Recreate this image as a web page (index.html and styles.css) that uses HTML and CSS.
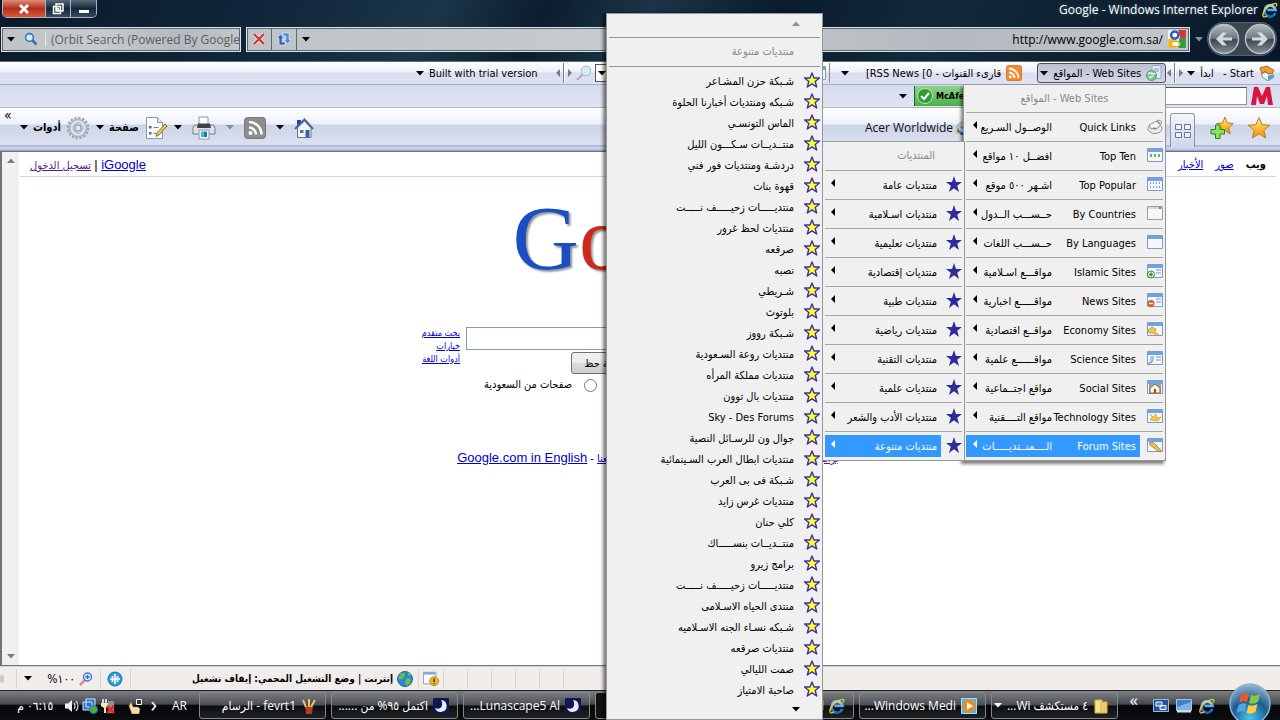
FILE: index.html
```html
<!DOCTYPE html>
<html lang="ar" dir="rtl">

<head>
    <meta charset="UTF-8">
    <title>Google - Windows Internet Explorer</title>
    <link rel="stylesheet" href="styles.css">
</head>
<body>
    <svg class="sprite" aria-hidden="true">
        <defs>
            <linearGradient id="gold" x1="0" y1="0" x2="0" y2="1">
                <stop offset="0" stop-color="#fff0a8"/>
                <stop offset="0.5" stop-color="#fcbf35"/>
                <stop offset="1" stop-color="#e98f10"/>
            </linearGradient>
            <linearGradient id="blue" x1="0" y1="0" x2="0" y2="1">
                <stop offset="0" stop-color="#8fe0ff"/>
                <stop offset="1" stop-color="#0d63c4"/>
            </linearGradient>
            <linearGradient id="steel" x1="0" y1="0" x2="0" y2="1">
                <stop offset="0" stop-color="#b4bac0"/>
                <stop offset="0.48" stop-color="#6d767f"/>
                <stop offset="0.52" stop-color="#3c4650"/>
                <stop offset="1" stop-color="#84909a"/>
            </linearGradient>
            <radialGradient id="orb" cx="0.5" cy="0.85" r="0.9">
                <stop offset="0" stop-color="#49c5ee"/>
                <stop offset="0.5" stop-color="#1b5c94"/>
                <stop offset="1" stop-color="#a9c4d8"/>
            </radialGradient>
        </defs>
        <symbol id="i-star" viewBox="0 0 16 16"><path d="M8 1l2 5h5.500l-4.300 3.500 1.500 5.500L8 11.800 3.300 15l1.500-5.500L.5 6H6z" fill="#ffff2e" stroke="#3a35a0" stroke-width="1.400" stroke-linejoin="round"/></symbol>
        <symbol id="i-bluestar" viewBox="0 0 16 16"><path d="M8 0l2 6h6l-4.800 3.700L13 16l-5-3.800L3 16l1.800-6.300L0 6h6z" fill="#2c2c9c"/></symbol>
        <symbol id="i-goldstar" viewBox="0 0 24 24"><path d="M12 1.500l3 7.200 7.800.6-6 5 2 7.700-6.800-4.200L5.200 22l2-7.700-6-5 7.800-.6z" fill="url(#gold)" stroke="#c27a17" stroke-linejoin="round"/></symbol>
        <symbol id="i-addstar" viewBox="0 0 24 24"><path d="M15 1l2.300 6 6 .5-4.600 4 1.500 6.500-5.200-3.600L9.500 18l1.600-6.500-4.600-4 6.200-.5z" fill="url(#gold)" stroke="#c27a17" stroke-linejoin="round"/><path d="M5.500 9h4.500v4.500h4.500V18H10v4.500H5.500V18H1v-4.500h4.500z" fill="#8be35a" stroke="#258421"/></symbol>
        <symbol id="i-ie" viewBox="0 0 18 18"><path d="M15 12.500A6.300 6.300 0 1 1 15.300 9H6" fill="none" stroke="url(#blue)" stroke-width="3"/><path d="M1.500 16.500C-1 12 8 2 15.500 1.500c2 .5 1 2.500.5 3.500M1.500 16.500c1.500.8 3 0 4.500-1" fill="none" stroke="#f9c42c" stroke-width="1.500"/></symbol>
        <symbol id="i-window" viewBox="0 0 16 14"><path d="M.5.500h15v13H.5z" fill="#f4f8fe" stroke="#7c9cc6"/><path d="M1 1h14v3H1z" fill="#6fa3e4"/></symbol>
        <symbol id="i-rss" viewBox="0 0 16 16"><rect x=".5" y=".5" width="15" height="15" rx="2" fill="#f58b2c" stroke="#d7782a"/><g fill="none" stroke="#fff" stroke-width="1.800"><path d="M3 7.500a5.500 5.500 0 0 1 5.500 5.500M3 3.500a9.500 9.500 0 0 1 9.500 9.500"/></g><circle cx="4.300" cy="11.800" r="1.500" fill="#fff"/></symbol>
        <symbol id="i-grayrss" viewBox="0 0 22 22"><rect x=".5" y=".5" width="21" height="21" rx="3" fill="#8d8d8d" stroke="#777"/><g fill="none" stroke="#fff" stroke-width="2.500"><path d="M5 10.500a7 7 0 0 1 7 7M5 5a12.500 12.500 0 0 1 12.500 12.500"/></g><circle cx="6.500" cy="16" r="2" fill="#fff"/></symbol>
        <symbol id="i-home" viewBox="0 0 20 20"><path d="M3 2h4v6H3z" fill="#2a3fc0"/><path d="M3.500 9.500L10.500 3l6.500 6.500V19.500H3.500z" fill="#f2f5fa" stroke="#68798f"/><path d="M1 11L10.500 1.500 19 11" fill="none" stroke="#48679c" stroke-width="2"/><path d="M11.500 12h4v7.500h-4z" fill="#2f66a0"/><path d="M6 12h3.500v3H6z" fill="#607486"/></symbol>
        <symbol id="i-printer" viewBox="0 0 24 24"><path d="M7 1h9v8H7z" fill="#fff" stroke="#8b98a6"/><path d="M2.500 9h19l1.500 3v6H1v-6z" fill="#dde2e7" stroke="#707a85"/><path d="M6 7.500h12l1 4.500H5z" fill="#3d444c"/><path d="M7 14h10v9H7z" fill="#fff" stroke="#8b98a6"/><path d="M9 15.500h3V21H9z" fill="#2ec4d8"/><path d="M12 15.500h3V21h-3z" fill="#3170c0"/></symbol>
        <symbol id="i-page" viewBox="0 0 22 24"><path d="M1.500 1.500h11l5 5v16h-16z" fill="#fcfdff" stroke="#8e99a7"/><path d="M12.500 1.500v5h5" fill="#dde5ef" stroke="#8e99a7"/><path d="M4 10h2.500v2.500H4zM4 16h2.500v2.500H4z" fill="#566a80"/><path d="M8.500 11.500h5M8.500 17.500h3" stroke="#70839c"/><path d="M20 8l2 2-8 9-3 1.500L12 17z" fill="#f3c842" stroke="#6b5520" stroke-width=".8"/></symbol>
        <symbol id="i-gear" viewBox="0 0 24 24"><circle cx="12" cy="12" r="10.200" fill="none" stroke="#94a4b0" stroke-width="2" stroke-dasharray="2.400 1.600"/><circle cx="12" cy="12" r="8.500" fill="#dbe4ea" stroke="#a3b3be" stroke-width="1.500"/><circle cx="12" cy="12" r="5" fill="#c3d0d9" stroke="#a9b8c2"/><circle cx="12" cy="12" r="3" fill="#e3e8f4" stroke="#8797a5"/></symbol>
        <symbol id="i-search" viewBox="0 0 14 14"><path d="M8 8l4.500 4.500" stroke="#3b6fae" stroke-width="2.500"/><circle cx="5.500" cy="5.500" r="3.900" fill="#d7ebfc" stroke="#3d73b8" stroke-width="1.600"/></symbol>
        <symbol id="i-find" viewBox="0 0 16 16"><path d="M1 15l6-6" stroke="#bba3cf" stroke-width="2.200"/><circle cx="10" cy="6" r="4.800" fill="#d5edf6" stroke="#a6bccb"/></symbol>
        <symbol id="i-stop" viewBox="0 0 12 12"><path d="M1 1l10 10M11 1L1 11" stroke="#f3d9d9" stroke-width="4"/><path d="M1 1l10 10M11 1L1 11" stroke="#c8393a" stroke-width="2.200"/></symbol>
        <symbol id="i-refresh" viewBox="0 0 16 16"><path d="M1 7.500L4.500 3 8 7.500H6V11h3v3H3V7.500z" fill="#2a63b6" stroke="#dceafa" stroke-width=".7"/><path d="M15 8.500L11.500 13 8 8.500h2V5H7V2h6v6.500z" fill="#4b88d6" stroke="#dceafa" stroke-width=".7"/></symbol>
        <symbol id="i-google" viewBox="0 0 18 18"><path d="M1 1h16v16H1z" fill="#f5f7fb"/><path d="M10 1h7v7h-5z" fill="#d8342c"/><path d="M11 8h6v9h-7z" fill="#2d9d49"/><path d="M1 9h5v8H1z" fill="#f5b921"/><circle cx="7" cy="5.500" r="3.300" fill="#fff" stroke="#2a5bc9" stroke-width="2.200"/><ellipse cx="7.500" cy="13.500" rx="4" ry="2.600" fill="#fff" stroke="#e9a91b" stroke-width="1.500"/></symbol>
        <symbol id="i-start" viewBox="0 0 16 16"><path d="M3 8l10-1 2 5-6 4-6-4z" fill="#f4f6fa" stroke="#7492ad"/><path d="M1 3l7-2 7 4.500-2 3L9 9 6 6 3 9z" fill="#f39a2c" stroke="#b06a1c"/><path d="M9 10.500l5-1v3l-5 3z" fill="#4b9fd4"/></symbol>
        <symbol id="i-sites" viewBox="0 0 16 16"><path d="M6 .5h9v13H6z" fill="#e3eafb" stroke="#94a6d0"/><path d="M8 4h5M8 6h5" stroke="#8b9cc8"/><circle cx="5.500" cy="10.500" r="5" fill="#7cc88a" stroke="#4a9c63"/><path d="M2 9c3-3 5 2 7-1M3 13l4-2" stroke="#e9f8ee" stroke-width="1.500" fill="none"/></symbol>
        <symbol id="i-mouse" viewBox="0 0 16 16"><ellipse cx="8" cy="10.500" rx="7" ry="5" fill="#eee" stroke="#8f8f9a"/><path d="M2 7l10-5 3 2-4 6-7 1z" fill="#f8f8fa" stroke="#8f8f9a"/><path d="M6 10l3 1M10 3l3 3" stroke="#53a06b" stroke-width="1.500"/></symbol>
        <symbol id="i-globe" viewBox="0 0 16 16"><circle cx="8" cy="8" r="7.500" fill="#2c86d6" stroke="#265f98"/><path d="M3 3c4-3 6 0 4 3S3 9 1 7zM9 8c4-2 6 1 4 4s-4 3-5 1zM11 1l3 3-3 1z" fill="#5ec152"/></symbol>
        <symbol id="i-blocked" viewBox="0 0 18 16"><path d="M.5.500h14v13H.5z" fill="#fff" stroke="#8393b4"/><path d="M1 1h13v2H1z" fill="#7ba6dd"/><circle cx="12.500" cy="10.500" r="5" fill="#f5b529" stroke="#b8801a"/><path d="M12.500 7.500v4M12.500 12.500v1.500" stroke="#422d0b" stroke-width="1.600"/></symbol>
        <symbol id="i-compat" viewBox="0 0 16 16"><circle cx="8" cy="8" r="7" fill="#2b9ed6" stroke="#1474ac"/><path d="M8 3v10M3 8h10M5.500 5v6M10.500 5v6" stroke="#fff" stroke-width="1.600"/></symbol>
        <symbol id="i-zoom" viewBox="0 0 14 14"><path d="M1 13l5-5" stroke="#e08d8b" stroke-width="2.500"/><circle cx="8.500" cy="5" r="4" fill="#d8eafc" stroke="#477cc6" stroke-width="1.500"/><path d="M8.500 3v4M6.500 5h4" stroke="#2969c0" stroke-width="1.300"/></symbol>
        <symbol id="i-luna" viewBox="0 0 16 16"><rect width="16" height="16" rx="1" fill="#10164f"/><path d="M8 2a6 6 0 1 1-6 8c6 3 9-3 6-8z" fill="#e7ecff"/></symbol>
        <symbol id="i-media" viewBox="0 0 16 16"><path d="M.5.500h15v15H.5z" fill="#4bb5e6" stroke="#a3defa"/><circle cx="8" cy="8" r="6.500" fill="#f18a1c"/><path d="M6 4.500l6 3.500-6 3.500z" fill="#fff"/></symbol>
        <symbol id="i-folder" viewBox="0 0 14 16"><path d="M1 2h7v13H1z" fill="#f7e28d" stroke="#d3b24c"/><path d="M7 4h6v11H7z" fill="#ecce64" stroke="#d3b24c"/></symbol>
        <symbol id="i-paint" viewBox="0 0 14 16"><path d="M3 8h8l-1 8H4z" fill="#b23b22"/><path d="M4 9L1 2M7 9V1M9 9l4-7" stroke="#e9c26d" stroke-width="2"/></symbol>
        <symbol id="i-desktop" viewBox="0 0 16 14"><path d="M.5.500h15v11H.5z" fill="#3f7fcc" stroke="#a9c5e4"/><path d="M1 8l14-5v8H1z" fill="#7fb4e9"/><path d="M1 12.500h14" stroke="#d4dee8" stroke-width="2"/></symbol>
        <symbol id="i-switch" viewBox="0 0 16 14"><path d="M.5.500h15v12H.5z" fill="#264f9a" stroke="#9bb4d8"/><path d="M3 3h6v4H3zM7 6.500h6v4H7z" fill="#4c82cc" stroke="#fff"/></symbol>
        <symbol id="i-nav" viewBox="0 0 32 32"><circle cx="16" cy="16" r="14.500" fill="url(#steel)" stroke="#b8c0c6" stroke-width="1.500"/><path d="M24 14.500H14.500l4.500-5h-4.500L8 16l6.500 6.500H19l-4.500-5H24z" fill="#d4d9dd"/></symbol>
        <symbol id="i-orb" viewBox="0 0 42 42"><circle cx="21" cy="21" r="20" fill="url(#orb)" stroke="#8fb1ca" stroke-width="1.500"/><path d="M12 12q4-3 8-1l-2 8q-4-2-8 1z" fill="#ea5b28"/><path d="M22 12q4 2 9-1l-2 8q-5 3-9 1z" fill="#8cc63e"/><path d="M9.500 22q4-3 8-1l-2 8q-4-2-8 1z" fill="#4fa5e8"/><path d="M19.500 22q4 2 9-1l-2 8q-5 3-9 1z" fill="#fbce3a"/></symbol>
        <symbol id="i-down" viewBox="0 0 8 5"><path d="M0 0h8L4 4.500z" fill="currentColor"/></symbol>
        <symbol id="i-grip" viewBox="0 0 16 20"><path d="M4 6v8L0 10zM12 6v8l4-4z" fill="#777b88"/><path d="M7.500 0v20" stroke="#777b88"/><path d="M8.500 0v20" stroke="#fff"/></symbol>
    </svg>

    <header class="chrome">
        <div class="title-bar">
            <svg class="icon16"><use href="#i-ie"/></svg>
            <span class="window-title">Google - Windows Internet Explorer</span>
            <div class="window-buttons">
                <button class="minimize" aria-label="تصغير"><svg viewBox="0 0 12 12"><path d="M1 7h10v3H1z" fill="#fff"/></svg></button>
                <button aria-label="استعادة"><svg viewBox="0 0 12 12"><path d="M4 1h7v7H4z M1.500 3.500h7v7h-7z M4.500 5.500h2v2h-2z" fill="none" stroke="#fff" stroke-width="1.500"/></svg></button>
                <button class="close" aria-label="إغلاق"><svg viewBox="0 0 12 12"><path d="M2 2l8 8M10 2l-8 8" stroke="#fff" stroke-width="2.800"/></svg></button>
            </div>
        </div>
        <div class="address-row">
            <div class="nav-buttons">
                <button aria-label="الأمام"><svg class="flip"><use href="#i-nav"/></svg></button>
                <button aria-label="الخلف"><svg><use href="#i-nav"/></svg></button>
            </div>
            <button class="drop dim" aria-label="الصفحات الأخيرة"><svg><use href="#i-down"/></svg></button>
            <div class="address-box">
                <svg class="icon20"><use href="#i-google"/></svg>
                <input class="url" dir="ltr" type="text" aria-label="العنوان" value="http://www.google.com.sa/">
                <button class="drop" aria-label="السجل"><svg><use href="#i-down"/></svg></button>
                <button class="cell" aria-label="تحديث"><svg class="icon16"><use href="#i-refresh"/></svg></button>
                <button class="cell" aria-label="إيقاف"><svg class="icon12"><use href="#i-stop"/></svg></button>
            </div>
            <div class="search-box">
                <input dir="ltr" type="text" aria-label="بحث" value="(Orbit Search (Powered By Google">
                <button aria-label="بحث"><svg class="icon14"><use href="#i-search"/></svg></button>
                <button class="drop" aria-label="خيارات البحث"><svg><use href="#i-down"/></svg></button>
            </div>
        </div>
    </header>

    <nav class="links-bar">
        <button class="tool"><svg class="icon16"><use href="#i-start"/></svg><span>Start - &nbsp; ابدأ</span><svg class="caret"><use href="#i-down"/></svg></button>
        <svg class="grip"><use href="#i-grip"/></svg>
        <button class="tool pressed"><svg class="icon16"><use href="#i-sites"/></svg><span>Web Sites - المواقع</span><svg class="caret"><use href="#i-down"/></svg></button>
        <button class="tool rss-tool"><svg class="icon16"><use href="#i-rss"/></svg><span>قارىء القنوات - <bdi dir="ltr">[RSS News [0</bdi></span><svg class="caret"><use href="#i-down"/></svg></button>
        <button class="tool edge-tool" aria-label="نافذة"><svg class="icon16"><use href="#i-window"/></svg></button>
        <div class="links-end">
            <button class="combo" aria-label="كلمات البحث"><svg class="caret"><use href="#i-down"/></svg></button>
            <button class="tool" aria-label="بحث"><svg class="icon16"><use href="#i-find"/></svg></button>
            <svg class="grip"><use href="#i-grip"/></svg>
            <button class="tool trial"><span>Built with trial version</span><svg class="caret"><use href="#i-down"/></svg></button>
        </div>
    </nav>

    <div class="mcafee-bar">
        <svg class="mcafee-logo" viewBox="0 0 22 18"><path d="M0 18L3 0h4l4 9 4-9h4l3 18h-5l-1-9-3 8h-4L6 9l-1 9z" fill="#d8163c"/></svg>
        <input type="text" aria-label="بحث آمن">
        <button class="mcafee"><svg class="icon16" viewBox="0 0 16 16"><circle cx="8" cy="8" r="7.500" fill="#2f9c39" stroke="#b9e8b6"/><path d="M4 8l3 3 5-6" fill="none" stroke="#fff" stroke-width="2"/></svg><b>McAfee</b></button>
        <svg class="caret"><use href="#i-down"/></svg>
    </div>

    <div class="command-bar">
        <button class="fav" aria-label="المفضلة"><svg><use href="#i-goldstar"/></svg></button>
        <button class="fav" aria-label="إضافة إلى المفضلة"><svg><use href="#i-addstar"/></svg></button>
        <button class="quick-tabs" aria-label="علامات التبويب"><svg viewBox="0 0 16 14"><path d="M.5.500h6v5h-6zM9.500.500h6v5h-6zM.5 8.500h6v5h-6zM9.500 8.500h6v5h-6z" fill="#eef1f8" stroke="#6c7890"/></svg></button>
        <a class="tab" href="#"><svg class="icon16"><use href="#i-ie"/></svg><span>Acer Worldwide</span></a>
        <div class="commands">
            <button aria-label="الصفحة الرئيسية"><svg class="icon20"><use href="#i-home"/></svg></button>
            <svg class="caret"><use href="#i-down"/></svg>
            <button aria-label="موجز"><svg class="icon22"><use href="#i-grayrss"/></svg></button>
            <svg class="caret dim"><use href="#i-down"/></svg>
            <button aria-label="طباعة"><svg class="icon24"><use href="#i-printer"/></svg></button>
            <svg class="caret"><use href="#i-down"/></svg>
            <button class="named"><svg class="icon24"><use href="#i-page"/></svg><b>صفحة</b><svg class="caret"><use href="#i-down"/></svg></button>
            <button class="named"><svg class="icon24"><use href="#i-gear"/></svg><b>أدوات</b><svg class="caret"><use href="#i-down"/></svg></button>
        </div>
        <span class="more">»</span>
    </div>

    <main class="page">
        <div class="content">
            <div class="google-bar">
                <nav><b>ويب</b><a href="#">صور</a><a href="#">الأخبار</a></nav>
                <div dir="ltr"><a class="visited" href="#">تسجيل الدخول</a> <span class="latin">| <a href="#">iGoogle</a></span></div>
            </div>
            <div class="logo" dir="ltr"><span class="b">G</span><span class="r">o</span><span class="y">o</span><span class="b">g</span><span class="g">l</span><span class="r">e</span></div>
            <form class="search">
                <div class="query">
                    <input class="q" type="text" aria-label="بحث Google">
                    <div class="buttons"><button type="button">بحث Google</button><button type="button">ضربة حظ</button></div>
                </div>
                <div class="side-links"><a href="#">بحث متقدم</a><a href="#">خيارات</a><a href="#">أدوات اللغة</a></div>
                <div class="scope">
                    <span>البحث:</span>
                    <label><input type="radio" name="scope" checked> الويب</label>
                    <label><input type="radio" name="scope"> صفحات بالعربية</label>
                    <label><input type="radio" name="scope"> صفحات من السعودية</label>
                </div>
            </form>
            <p class="about"><a class="visited" href="#">برامج إعلانية</a> - <a href="#">كل ما تحب معرفته عن Google</a> - <a href="#">أعلن معنا</a> - <a class="latin" href="#">Google.com in English</a></p>
        </div>
        <div class="scrollbar"><svg class="caret up"><use href="#i-down"/></svg><svg class="caret"><use href="#i-down"/></svg></div>
    </main>

    <footer class="status-bar">
        <div class="panes"><i></i><i></i><i></i><i></i><i></i><i></i></div>
        <div class="pane blocked"><svg class="icon16"><use href="#i-blocked"/></svg></div>
        <div class="pane zone"><svg class="icon16"><use href="#i-globe"/></svg><span>إنترنت | وضع التشغيل المحمي: إيقاف تشغيل</span></div>
        <div class="pane"><svg class="icon16"><use href="#i-compat"/></svg></div>
        <div class="pane zoom"><svg class="icon14"><use href="#i-zoom"/></svg><span dir="ltr">%١٠٠</span><svg class="caret"><use href="#i-down"/></svg></div>
        <span class="resize"></span>
    </footer>

    <div class="taskbar">
        <button class="start" aria-label="ابدأ"><svg><use href="#i-orb"/></svg></button>
        <div class="quick-launch">
            <svg class="icon16"><use href="#i-ie"/></svg>
            <svg class="icon16"><use href="#i-desktop"/></svg>
            <svg class="icon16"><use href="#i-switch"/></svg>
            <span>»</span>
        </div>
        <div class="tasks">
            <button><svg class="icon16"><use href="#i-folder"/></svg><span>٤ مستكشف Wi...</span><svg class="caret"><use href="#i-down"/></svg></button>
            <button><svg class="icon16"><use href="#i-media"/></svg><span>Windows Medi...</span></button>
            <button><svg class="icon16"><use href="#i-ie"/></svg><span>Download</span></button>
            <button class="active"><svg class="icon16"><use href="#i-ie"/></svg><span>Google</span></button>
            <button><svg class="icon16"><use href="#i-luna"/></svg><span>Lunascape5 Al...</span></button>
            <button><svg class="icon16"><use href="#i-luna"/></svg><span>اكتمل ٩٥% من ......</span></button>
            <button><svg class="icon16"><use href="#i-paint"/></svg><span>fevrt1 - الرسام</span></button>
        </div>
        <div class="tray">
            <span class="lang">AR</span>
            <span class="chevron" dir="ltr">›</span>
            <svg class="icon16" viewBox="0 0 16 16"><path d="M3 4l2 5h5l2 2-1 5H4L1 8z" fill="#f8dca4" stroke="#a77b3a" stroke-width=".6"/><path d="M8.500 1.500h5v5h-5z" fill="#333" stroke="#fff"/></svg>
            <svg class="icon16 gap" viewBox="0 0 16 16"><path d="M3 1v4M6 1v4" stroke="#fff" stroke-width="1.500"/><path d="M1 5h7v3L6 10v5H4v-5L1 8z" fill="#f5e6ba"/><path d="M8 3h6v12H8z" fill="#8c9298"/><path d="M7 8l7 7M14 8l-7 7" stroke="#e22a22" stroke-width="2.500"/></svg>
            <svg class="icon16" viewBox="0 0 16 16"><path d="M4 1h9v8H4zM1 4h9v8H1z" fill="#2c6fc8" stroke="#dbe8f6"/><circle cx="11.500" cy="11.500" r="4" fill="#43b14c" stroke="#2670ad"/></svg>
            <svg class="icon16" viewBox="0 0 16 16"><path d="M1 5.500h3L8 2v12l-4-3.500H1z" fill="#eef1f4"/><path d="M10 5q2 3 0 6M12 3q4 5 0 10" fill="none" stroke="#d6dde2" stroke-width="1.200"/></svg>
            <time>٠٦:١٥ م</time>
        </div>
    </div>

    <!-- cascading favourites menus -->
    <div class="menu menu-sites">
        <div class="menu-title">Web Sites - المواقع</div>
        <a href="#"><svg class="icon16"><use href="#i-mouse"/></svg><span class="label"><span>Quick Links</span><span>الوصــول السـريع</span></span></a>
        <a href="#"><svg class="icon16"><use href="#i-window"/><path d="M3 7h2v3H3zM7 7h2v3H7zM11 7h2v3h-2z" fill="#77ad57"/></svg><span class="label"><span>Top Ten</span><span>افضــل ١٠ مواقع</span></span></a>
        <a href="#"><svg class="icon16"><use href="#i-window"/><path d="M3 6h1v2H3zM6 6h1v2H6zM9 6h1v2H9zM12 6h1v2h-1zM3 10h1v2H3zM6 10h1v2H6zM9 10h1v2H9zM12 10h1v2h-1z" fill="#7a9fcb"/></svg><span class="label"><span>Top Popular</span><span>اشـهر ٥٠٠ موقع</span></span></a>
        <a href="#"><svg class="icon16" viewBox="0 0 16 16"><path d="M.5 1.500h15v13H.5z" fill="#f8f8f8" stroke="#9a9ea8"/><path d="M1 2h14v2H1z" fill="#d5d7dc"/><path d="M12 2h2v2h-2z" fill="#a56a5c"/></svg><span class="label"><span>By Countries</span><span>حــســـب الــدول</span></span></a>
        <a href="#"><svg class="icon16"><use href="#i-window"/></svg><span class="label"><span>By Languages</span><span>حــســـب اللغات</span></span></a>
        <a href="#"><svg class="icon16"><use href="#i-window"/><path d="M9 7h5M9 10h5" stroke="#7396c4"/><circle cx="4" cy="11.500" r="3.500" fill="#e8f5e3" stroke="#398b38"/><path d="M4 9.500v4M2 11.500h4" stroke="#398b38" stroke-width="1.500"/></svg><span class="label"><span>Islamic Sites</span><span>مواقـــع اسـلامية</span></span></a>
        <a href="#"><svg class="icon16"><use href="#i-window"/><path d="M9 7h5M9 10h5" stroke="#7396c4"/><circle cx="4" cy="11.500" r="3.500" fill="#e3561d"/><path d="M2 11.500h4" stroke="#fff" stroke-width="1.500"/></svg><span class="label"><span>News Sites</span><span>مواقـــــع اخبارية</span></span></a>
        <a href="#"><svg class="icon16"><use href="#i-window"/><path d="M1 9l4-3 4 2-1 3 4 3-2 1-4-3-4 0z" fill="#f6c254" stroke="#bd8a2a" stroke-width=".7"/></svg><span class="label"><span>Economy Sites</span><span>مواقــع اقتصادية</span></span></a>
        <a href="#"><svg class="icon16"><use href="#i-window"/><path d="M9 7h5M9 10h5M3 7h4M3 9h4" stroke="#7396c4"/><path d="M1 15l5-5" stroke="#94a7c3" stroke-width="2"/></svg><span class="label"><span>Science Sites</span><span>مواقــــــع علمية</span></span></a>
        <a href="#"><svg class="icon16"><use href="#i-window"/><path d="M2 5h12v9H2z" fill="#8aa6bc"/><path d="M3 9l5-4 5 4v5H3z" fill="#fff2cf" stroke="#8c6532"/><path d="M7 10h2v4H7z" fill="#86522b"/></svg><span class="label"><span>Social Sites</span><span>مواقع اجتــماعية</span></span></a>
        <a href="#"><svg class="icon16"><use href="#i-window"/><path d="M3 6l3 3 3-3 1 4 4-1-3 4-8-1 2-3z" fill="#f2c939" stroke="#c99a24" stroke-width=".6"/></svg><span class="label"><span>Technology Sites</span><span>مواقع التــــقنية</span></span></a>
        <a class="current" href="#"><svg class="icon16"><use href="#i-window"/><path d="M2 6l4-1 8 8v2l-3-1-8-6z" fill="#f0bd4d" stroke="#a07828" stroke-width=".7"/></svg><span class="label"><span>Forum Sites</span><span>الــــمنــتديـــــات</span></span></a>
    </div>

    <div class="menu menu-forums">
        <div class="menu-title">المنتديات</div>
        <a href="#"><svg class="icon16"><use href="#i-bluestar"/></svg><span class="label">منتديات عامة</span></a>
        <a href="#"><svg class="icon16"><use href="#i-bluestar"/></svg><span class="label">منتديات اسـلامية</span></a>
        <a href="#"><svg class="icon16"><use href="#i-bluestar"/></svg><span class="label">منتديات تعليمية</span></a>
        <a href="#"><svg class="icon16"><use href="#i-bluestar"/></svg><span class="label">منتديات إقتصادية</span></a>
        <a href="#"><svg class="icon16"><use href="#i-bluestar"/></svg><span class="label">منتديات طبية</span></a>
        <a href="#"><svg class="icon16"><use href="#i-bluestar"/></svg><span class="label">منتديات رياضية</span></a>
        <a href="#"><svg class="icon16"><use href="#i-bluestar"/></svg><span class="label">منتديات التقنية</span></a>
        <a href="#"><svg class="icon16"><use href="#i-bluestar"/></svg><span class="label">منتديات علمية</span></a>
        <a href="#"><svg class="icon16"><use href="#i-bluestar"/></svg><span class="label">منتديات الأدب والشعر</span></a>
        <a class="current" href="#"><svg class="icon16"><use href="#i-bluestar"/></svg><span class="label">منتديات متنوعة</span></a>
    </div>

    <div class="menu menu-misc">
        <button class="scroll" aria-label="أعلى"><svg class="caret up dim"><use href="#i-down"/></svg></button>
        <div class="menu-title">منتديات متنوعة</div>
        <div class="list">
            <a href="#"><svg class="icon16"><use href="#i-star"/></svg>شـبكة حزن المشـاعر</a>
            <a href="#"><svg class="icon16"><use href="#i-star"/></svg>شـبكه ومنتديات أخبارنا الحلوة</a>
            <a href="#"><svg class="icon16"><use href="#i-star"/></svg>الماس التونسـي</a>
            <a href="#"><svg class="icon16"><use href="#i-star"/></svg>منتــديــات سـكـــون الليل</a>
            <a href="#"><svg class="icon16"><use href="#i-star"/></svg>دردشـة ومنتديات فور فني</a>
            <a href="#"><svg class="icon16"><use href="#i-star"/></svg>قهوة بنات</a>
            <a href="#"><svg class="icon16"><use href="#i-star"/></svg>منتديـــــات زحيـــــف نـــــت</a>
            <a href="#"><svg class="icon16"><use href="#i-star"/></svg>منتديات لحظ غرور</a>
            <a href="#"><svg class="icon16"><use href="#i-star"/></svg>صرقعه</a>
            <a href="#"><svg class="icon16"><use href="#i-star"/></svg>نصبه</a>
            <a href="#"><svg class="icon16"><use href="#i-star"/></svg>شـريطي</a>
            <a href="#"><svg class="icon16"><use href="#i-star"/></svg>بلوتوث</a>
            <a href="#"><svg class="icon16"><use href="#i-star"/></svg>شـبكة رووز</a>
            <a href="#"><svg class="icon16"><use href="#i-star"/></svg>منتديات روعة السـعودية</a>
            <a href="#"><svg class="icon16"><use href="#i-star"/></svg>منتديات مملكة المرأه</a>
            <a href="#"><svg class="icon16"><use href="#i-star"/></svg>منتديات بال توون</a>
            <a href="#"><svg class="icon16"><use href="#i-star"/></svg>Sky - Des Forums</a>
            <a href="#"><svg class="icon16"><use href="#i-star"/></svg>جوال ون للرسـائل النصية</a>
            <a href="#"><svg class="icon16"><use href="#i-star"/></svg>منتديات ابطال العرب السـينمائية</a>
            <a href="#"><svg class="icon16"><use href="#i-star"/></svg>شـبكة فى بى العرب</a>
            <a href="#"><svg class="icon16"><use href="#i-star"/></svg>منتديات غرس زايد</a>
            <a href="#"><svg class="icon16"><use href="#i-star"/></svg>كلي حنان</a>
            <a href="#"><svg class="icon16"><use href="#i-star"/></svg>منتــديــات بنســـــاك</a>
            <a href="#"><svg class="icon16"><use href="#i-star"/></svg>برامج زيرو</a>
            <a href="#"><svg class="icon16"><use href="#i-star"/></svg>منتديـــــات زحيـــــف نـــــت</a>
            <a href="#"><svg class="icon16"><use href="#i-star"/></svg>منتدى الحياه الاسـلامى</a>
            <a href="#"><svg class="icon16"><use href="#i-star"/></svg>شـبكه نسـاء الجنه الاسـلاميه</a>
            <a href="#"><svg class="icon16"><use href="#i-star"/></svg>منتديات صرقعه</a>
            <a href="#"><svg class="icon16"><use href="#i-star"/></svg>صمت الليالي</a>
            <a href="#"><svg class="icon16"><use href="#i-star"/></svg>صاحبة الامتياز</a>
        </div>
        <button class="scroll" aria-label="أسفل"><svg class="caret"><use href="#i-down"/></svg></button>
    </div>
</body>
</html>
```
FILE: styles.css
```css
* {
    box-sizing: border-box;
}
body {
    margin: 0;
    height: 100vh;
    display: flex;
    flex-direction: column;
    position: relative;
    overflow: hidden;
    background: #fff;
    color: #000;
    font-family: "DejaVu Sans Condensed", "DejaVu Sans", sans-serif;
    font-size: 11px;
}
button {
    display: flex;
    align-items: center;
    padding: 0;
    border: 0;
    background: none;
    color: inherit;
    font: inherit;
    white-space: nowrap;
}
svg {
    display: block;
    flex: none;
}
.sprite {
    position: absolute;
    width: 0;
    height: 0;
}
.icon12 {
    width: 12px;
    height: 12px;
}
.icon14 {
    width: 14px;
    height: 14px;
}
.icon16 {
    width: 16px;
    height: 16px;
}
.icon20 {
    width: 20px;
    height: 20px;
}
.icon22 {
    width: 22px;
    height: 22px;
}
.icon24 {
    width: 24px;
    height: 24px;
}
.caret, .drop svg {
    width: 8px;
    height: 5px;
}
.dim {
    color: #8b8f94;
}
.up {
    transform: rotate(180deg);
}
.flip {
    transform: scaleX(-1);
}

/* window frame */
.chrome {
    height: 62px;
    background: linear-gradient(115deg, #0a1a2a 0%, #10263a 20%, #1b3448 34%, #0b1d2f 42%, #1c3448 50%, #0a1c2e 60%, #12293c 72%, #081727 100%);
    border-bottom: 1px solid #5d6c7a;
}
.title-bar {
    display: flex;
    height: 26px;
    padding: 2px 2px 0 0;
    gap: 4px;
}
.window-title {
    color: #fff;
    font: 12px/16px "Open Sans", sans-serif;
    text-shadow: 0 0 3px #567;
}
.window-buttons {
    display: flex;
    height: 18px;
    margin: -2px auto 0 2px;
    border: 1px solid #aab4bd;
    border-top: 0;
    border-radius: 0 0 5px 5px;
    overflow: hidden;
}
.window-buttons button {
    width: 25px;
    justify-content: center;
    background: linear-gradient(#566879, #14283a 50%, #354c5e);
    border-right: 1px solid #aab4bd;
}
.window-buttons .minimize {
    border-right: 0;
}
.window-buttons .close {
    width: 43px;
    background: linear-gradient(#e08a78, #b0301b 50%, #d9573a);
}
.window-buttons svg {
    width: 12px;
    height: 12px;
}
.address-row {
    display: flex;
    align-items: center;
    height: 26px;
}
.nav-buttons {
    display: flex;
    gap: 4px;
    margin-right: 4px;
    border-radius: 16px;
    background: #3a4753;
    box-shadow: 0 0 0 1px #56626d;
}
.nav-buttons svg {
    width: 32px;
    height: 32px;
}
.drop {
    width: 18px;
    justify-content: center;
}
.address-box, .search-box {
    display: flex;
    align-items: center;
    height: 25px;
    background: linear-gradient(90deg, #bec3c6, #c6cbce 40%, #b4babf 75%, #c3c7cc);
    border: 1px solid #dfe3e6;
    outline: 1px solid #5c6874;
    outline-offset: -2px;
}
.address-box {
    flex: 1;
    padding-right: 2px;
}
.address-box .cell {
    width: 25px;
    height: 23px;
    justify-content: center;
    border-right: 1px solid #5c6874;
}
.address-box input, .search-box input {
    min-width: 0;
    border: 0;
    padding: 0;
    background: none;
    font: 12px "Open Sans", sans-serif;
}
.address-box .url {
    flex: 1;
    text-align: right;
    margin-right: 4px;
}
.search-box {
    width: 240px;
    margin: 0 5px 0 1px;
}
.search-box input {
    flex: 1;
    text-align: right;
    color: #5a5e62;
}
.search-box button:not(.drop) {
    padding: 0 7px 0 4px;
    border-right: 1px solid #e5e8ea;
}

/* toolbars */
.links-bar {
    display: flex;
    align-items: center;
    height: 23px;
    padding-right: 2px;
    background: linear-gradient(#fff, #eef0fb 45%, #d9def0 50%, #dde2f3);
    border-bottom: 1px solid #a9adbb;
}
.tool {
    gap: 5px;
    height: 20px;
    padding: 0 3px;
}
.grip {
    width: 16px;
    height: 20px;
    margin: 0 1px;
}
.pressed {
    width: 129px;
    justify-content: space-between;
    border: 1px solid #4c5160;
    border-radius: 3px;
    background: linear-gradient(#bcc1cf, #d3d7e6);
}
.rss-tool {
    margin-right: 12px;
}
.rss-tool .caret {
    margin-right: 12px;
}
.edge-tool {
    margin-right: 8px;
    border-right: 1px solid #888;
}
.links-end {
    display: flex;
    align-items: center;
    margin: 0 auto 0 413px;
}
.combo {
    width: 28px;
    height: 18px;
    padding-right: 16px;
    border: 1px solid #555;
    background: #fff;
}
.trial {
    padding-right: 17px;
}
.mcafee-bar {
    display: flex;
    align-items: center;
    height: 23px;
    padding-right: 7px;
    background: linear-gradient(#d5daef, #dfe3f3);
    border-bottom: 1px solid #b1b4bf;
}
.mcafee-logo {
    width: 22px;
    height: 18px;
}
.mcafee-bar input {
    width: 250px;
    height: 18px;
    margin: 0 4px 0 12px;
    border: 1px solid #9097a8;
    border-top-color: #555;
}
.mcafee {
    width: 71px;
    height: 20px;
    gap: 3px;
    padding-left: 2px;
    flex-direction: row-reverse;
    justify-content: flex-start;
    overflow: hidden;
    background: linear-gradient(#8fd38a, #4ab04a);
    border-left: 1px solid #275c2b;
    font-size: 9px;
}
.mcafee-bar .caret {
    margin-right: 7px;
}
.command-bar {
    display: flex;
    align-items: center;
    position: relative;
    height: 43px;
    padding: 0 9px 4px 20px;
    background: linear-gradient(#fff 0, #eef1fa 16px, #ccd5e8 17px, #dbe1f2 37px, #8f96ac 38px, #d6ddf8 39px, #b6c0ee 42px, #888 43px);
}
.fav {
    margin-left: 13px;
}
.fav svg {
    width: 24px;
    height: 24px;
}
.quick-tabs {
    align-self: flex-end;
    width: 25px;
    height: 34px;
    margin-right: 2px;
    justify-content: center;
    border: 1px solid #8b94a8;
    border-bottom: 0;
    border-radius: 3px 3px 0 0;
    background: linear-gradient(#f4f6fc, #cfd7ea);
}
.quick-tabs svg {
    width: 16px;
    height: 14px;
}
.tab {
    display: flex;
    gap: 2px;
    margin-right: 199px;
    color: #111;
    font: 12px/18px "Open Sans", sans-serif;
    text-decoration: none;
}
.commands {
    display: flex;
    align-items: center;
    gap: 10px;
    margin-right: auto;
}
.commands .named {
    gap: 5px;
    margin-right: -4px;
}
.more {
    position: absolute;
    top: -1px;
    left: 4px;
    font-size: 14px;
}

/* web page */
.page {
    display: flex;
    flex: 1;
    min-height: 0;
    border: 1px solid #6f747c;
    border-width: 1px 0 1px 2px;
}
.content {
    flex: 1;
    padding: 0 4px 0 1px;
}
.latin {
    font: 13px "Liberation Sans", sans-serif;
}
.page a {
    color: #0000cc;
}
.page .visited {
    color: #551a8b;
}
.google-bar {
    display: flex;
    justify-content: space-between;
    height: 25px;
    padding: 5px 10px 0 10px;
    border-bottom: 1px solid #c9d7f1;
    line-height: 16px;
}
.google-bar nav {
    display: flex;
    gap: 12px;
}
.logo {
    margin-top: 11px;
    text-align: center;
    font: 92px/100px "Liberation Serif", serif;
    text-shadow: 2px 2px 2px #999;
}
.b {
    color: #1a4fc4;
}
.r {
    color: #d0271b;
}
.y {
    color: #e8b210;
}
.g {
    color: #18962e;
}
.search {
    display: grid;
    grid-template-columns: 1fr 364px 1fr;
    margin-top: 39px;
}
.query {
    grid-column: 2;
}
.q {
    display: block;
    width: 100%;
    height: 23px;
    border: 1px solid #7f9db9;
}
.buttons {
    display: flex;
    justify-content: center;
    gap: 4px;
    margin-top: 2px;
}
.buttons button {
    height: 22px;
    padding: 0 12px;
    border: 1px solid #707070;
    border-radius: 3px;
    background: linear-gradient(#f2f2f2, #ebebeb 50%, #ddd 50%, #cfcfcf);
}
.side-links {
    display: flex;
    flex-direction: column;
    padding-right: 6px;
    font-size: 9px;
    line-height: 13px;
}
.scope {
    grid-column: 1 / -1;
    display: flex;
    justify-content: center;
    gap: 12px;
    margin-top: 1px;
    line-height: 20px;
}
.scope label {
    display: flex;
    align-items: center;
    gap: 8px;
}
.scope input {
    margin: 0 4px;
}
.about {
    margin: 55px 0 0;
    text-align: center;
    line-height: 16px;
}
.scrollbar {
    display: flex;
    flex-direction: column;
    justify-content: space-between;
    align-items: center;
    width: 17px;
    padding: 6px 0;
    background: #f0f0f0;
    color: #7d7d7d;
}

/* bottom bars */
.status-bar {
    display: flex;
    align-items: center;
    height: 24px;
    background: #f0edeb;
    border-top: 1px solid #d5d5d5;
    font: bold 10px "DejaVu Sans Condensed", sans-serif;
}
.panes {
    display: flex;
    margin-right: auto;
}
.panes i {
    width: 24px;
    height: 20px;
    border-left: 1px solid #d8d5d2;
}
.pane {
    display: flex;
    align-items: center;
    height: 20px;
    gap: 4px;
    padding: 0 5px;
    border-left: 1px solid #d8d5d2;
}
.blocked {
    padding: 0 4px;
}
.zone {
    width: 288px;
}
.pane:not(.zone):not(.blocked) {
    padding: 0 7px;
}
.zone + .pane {
    width: 30px;
}
.pane.zoom {
    width: 84px;
    padding-right: 10px;
    font-weight: normal;
    font-size: 12px;
}
.zoom .caret {
    margin-right: auto;
}
.resize {
    width: 16px;
    height: 8px;
    border-left: 4px dotted #cfcac6;
}
.taskbar {
    display: flex;
    align-items: center;
    height: 30px;
    background: linear-gradient(#7c8083, #45494d 45%, #050709 50%, #0b0d10);
    border-top: 1px solid #202326;
    color: #fff;
    font: 12px "Open Sans", "DejaVu Sans Condensed", sans-serif;
}
.start {
    margin: -4px 9px 0 0;
}
.start svg {
    width: 42px;
    height: 42px;
}
.quick-launch {
    display: flex;
    align-items: center;
    gap: 7px;
    width: 97px;
    margin-right: 14px;
}
.quick-launch span {
    margin: -12px 8px 0 0;
    font-size: 17px;
}
.tasks {
    display: flex;
    flex: 1;
    gap: 5px;
}
.tasks button {
    flex: 1;
    min-width: 0;
    height: 27px;
    gap: 5px;
    padding: 0 8px;
    border: 1px solid #85898d;
    border-radius: 3px;
    background: linear-gradient(#787c80, #4a4e52 48%, #0c0e10 52%, #1f2225);
}
.tasks .active {
    background: #101214;
}
.tasks .caret {
    margin: 0 auto 0 -5px;
}
.tray {
    display: flex;
    align-items: center;
    gap: 2px;
    width: 199px;
    padding-right: 12px;
}
.chevron {
    margin: -6px 13px 0 4px;
    font-size: 22px;
}
.tray .gap {
    margin-right: 10px;
}
.tray time {
    margin-right: 9px;
}

/* menus over the page */
.menu {
    position: absolute;
    display: flex;
    flex-direction: column;
    padding: 0 2px;
    background: #f0f0f0;
    border: 1px solid #979797;
    box-shadow: -2px 3px 3px rgba(0, 0, 0, 0.5);
}
.menu a {
    display: flex;
    align-items: center;
    color: #000;
    text-decoration: none;
    white-space: nowrap;
}
.menu .icon16 {
    margin-bottom: 3px;
}
.menu-title {
    color: #8a8a8a;
    line-height: 28px;
}
.menu-sites {
    top: 84px;
    right: 114px;
    width: 203px;
}
.menu-sites .menu-title {
    text-align: center;
    line-height: 27px;
}
.menu-forums {
    top: 141px;
    right: 315px;
    width: 143px;
    box-shadow: none;
}
.menu-forums .menu-title {
    padding-right: 27px;
}
.menu-sites a, .menu-forums a {
    height: 29px;
    border-top: 1px solid #a5a5a5;
    gap: 7px;
}
.menu-forums a {
    gap: 5px;
}
.menu .label {
    display: flex;
    align-items: center;
    flex: 1;
    height: 22px;
    padding-right: 4px;
}
.menu .label::after {
    content: "";
    margin: 0 auto 4px 7px;
    border: 4px solid transparent;
    border-right: 4px solid currentColor;
    border-left: 0;
}
.menu-forums .label::after {
    margin-left: 6px;
}
.menu-sites .label span:first-child {
    width: 84px;
}
.menu .current .label {
    background: #3399ff;
    color: #fff;
}
.menu-misc {
    top: 13px;
    bottom: 0;
    right: 457px;
    width: 217px;
    box-shadow: -3px 0 3px rgba(0, 0, 0, 0.5);
}
.menu-misc .scroll {
    height: 23px;
    padding: 0 20px 4px 0;
}
.menu-misc .menu-title {
    padding-right: 26px;
    border-top: 1px solid #979797;
    border-bottom: 1px solid #979797;
}
.menu-misc .list {
    padding-top: 4px;
}
.menu-misc .list a {
    height: 21px;
    gap: 10px;
}
.menu-misc .scroll:last-child {
    height: 17px;
    padding-bottom: 0;
}
```
